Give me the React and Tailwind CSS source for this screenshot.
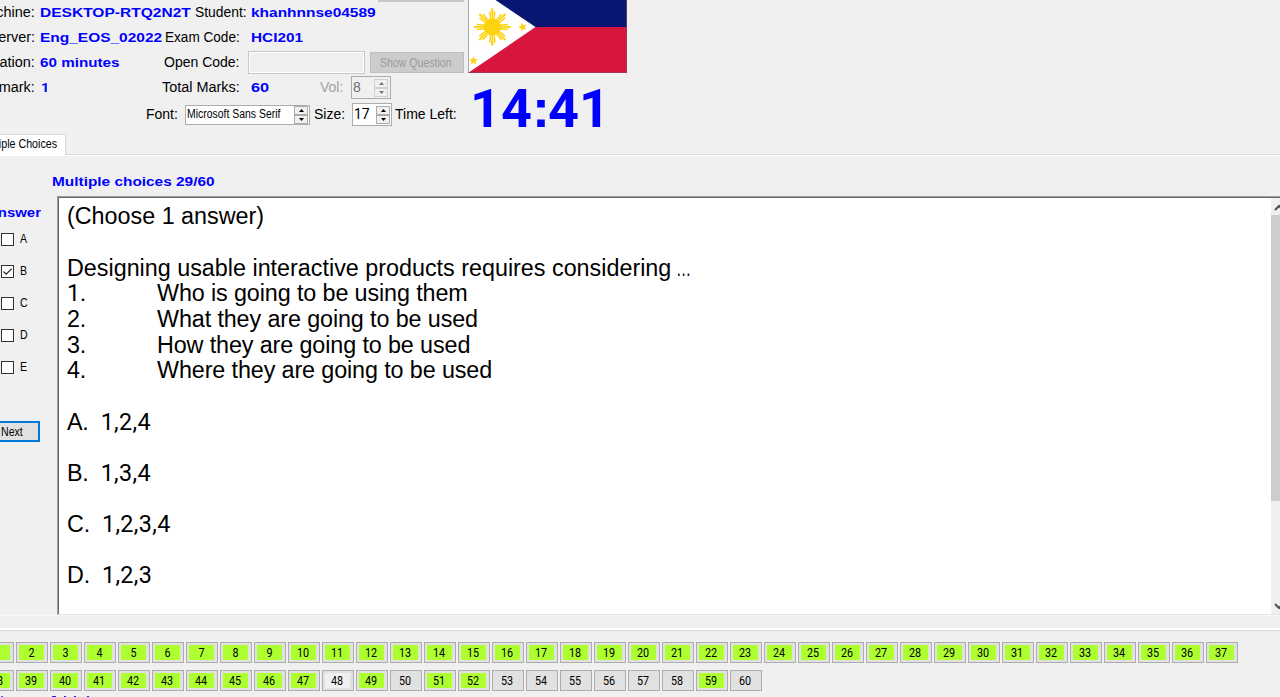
import React from "react";

const INFO = "font-bold text-[#0000ff] origin-left inline-block whitespace-nowrap";

function Label({ className = "", children }) {
  return <span className={"inline-block whitespace-nowrap text-[14px] " + className}>{children}</span>;
}

function Left({ children }) {
  return (
    <div className="flex w-[35px] shrink-0 justify-end overflow-hidden whitespace-nowrap text-[14px]">
      <span className="inline-block origin-right scale-x-[1.03]">{children}</span>
    </div>
  );
}

function Spin({ disabled }) {
  const fill = disabled ? "#777" : "#000";
  const box = disabled ? "border-[#d0d0d0]" : "border-[#acacac]";
  return (
    <div className="flex w-[14px] shrink-0 flex-col">
      <div className={"flex h-[9px] items-center justify-center border bg-[#f0f0f0] " + box}>
        <svg width="5" height="3" viewBox="0 0 5 3"><path d="M2.5 0L5 3H0z" fill={fill} /></svg>
      </div>
      <div className={"flex h-[9px] items-center justify-center border bg-[#f0f0f0] " + box}>
        <svg width="5" height="3" viewBox="0 0 5 3"><path d="M0 0H5L2.5 3z" fill={fill} /></svg>
      </div>
    </div>
  );
}

function Star({ x, y, r, rot }) {
  const pts = Array.from({ length: 10 }, (_, i) => {
    const a = (Math.PI * i) / 5 - Math.PI / 2;
    const q = i % 2 ? r * 0.42 : r;
    return `${Math.cos(a) * q},${Math.sin(a) * q}`;
  }).join(" ");
  return <polygon points={pts} fill="#fcd116" transform={`translate(${x} ${y}) rotate(${rot})`} />;
}

function Flag() {
  return (
    <svg width="159" height="73" viewBox="0 0 159 73" className="block">
      <rect width="159" height="27" fill="#071673" />
      <rect y="27" width="159" height="46" fill="#d8163d" />
      <path d="M0 -18.5V73L67.5 27z" fill="#fff" />
      <g transform="translate(24.3 27)" fill="#fcd30c">
        <circle r="8.5" />
        {[0, 45, 90, 135, 180, 225, 270, 315].map((a) => (
          <g key={a} transform={`rotate(${a})`}>
            <path d="M-.7 -7L-1.1 -18.4H1.1L.7 -7z" />
            <path d="M-2.4 -7L-3.3 -15.4L-1.7 -15.8L-1.1 -7z" />
            <path d="M2.4 -7L3.3 -15.4L1.7 -15.8L1.1 -7z" />
          </g>
        ))}
      </g>
      <Star x={54.7} y={27} r={4.7} rot={-18} />
      <Star x={5.5} y={60.7} r={4.7} rot={0} />
      <path d="M.5 0V72.5" stroke="#aaa" fill="none" />
      <path d="M0 72.5H159M158.5 0V73" stroke="#8c4555" strokeOpacity=".7" fill="none" />
    </svg>
  );
}

function Header() {
  return (
    <div className="flex h-[134px]">
      <div className="w-[468px] shrink-0">
        <div className="flex h-[25px] items-center text-[13px]">
          <Left>Machine:</Left>
          <div className="w-[155px] pl-[5px]"><span className={INFO + " scale-x-[1.195]"}>DESKTOP-RTQ2N2T</span></div>
          <div className="w-[61px] pl-[5px]"><Label className="origin-left scale-x-[.99]">Student:</Label></div>
          <span className={INFO + " scale-x-[1.19]"}>khanhnnse04589</span>
          <div className="mr-1 ml-auto h-[2px] w-[86px] self-start bg-[#c8c8c8]" />
        </div>
        <div className="flex h-[25px] items-center text-[13px]">
          <Left>Server:</Left>
          <div className="w-[125px] pl-[5px]"><span className={INFO + " scale-x-[1.19]"}>Eng_EOS_02022</span></div>
          <div className="w-[91px] pl-[5px]"><Label className="origin-left scale-x-[.97]">Exam Code:</Label></div>
          <span className={INFO + " scale-x-[1.18]"}>HCI201</span>
        </div>
        <div className="flex h-[25px] items-center text-[13px]">
          <Left>Duration:</Left>
          <div className="w-[124px] pl-[5px]"><span className={INFO + " scale-x-[1.17]"}>60 minutes</span></div>
          <div className="w-[89px] pl-[5px]"><Label className="origin-left">Open Code:</Label></div>
          <div className="h-[23px] w-[117px] border border-[#c8c8c8] bg-[#f0f0f0] outline outline-1 -outline-offset-2 outline-white" />
          <div className="mr-1 ml-auto flex h-[21px] w-[94px] items-center justify-center border border-[#bfbfbf] bg-[#cccccc] text-[12px] whitespace-nowrap text-[#9a9a9a]">
            <span className="inline-block -translate-x-px scale-x-[.88]">Show Question</span>
          </div>
        </div>
        <div className="flex h-[25px] items-center text-[13px]">
          <Left>Q mark:</Left>
          <div className="w-[122px] pl-[6px]"><span className={INFO + " scale-x-[1.1] [font-family:Roboto,sans-serif]"}>1</span></div>
          <div className="w-[94px] pl-[5px]"><Label className="origin-left scale-x-[1.03]">Total Marks:</Label></div>
          <span className={INFO + " w-[69px] scale-x-[1.25]"}>60</span>
          <Label className="w-[31px] text-[#a0a0a0]">Vol:</Label>
          <div className="flex h-[23px] w-[40px] items-center justify-between border border-[#acacac] pr-[2px] pl-px">
            <span className="pb-[2px] text-[14px] leading-none text-[#6d6d6d]">8</span>
            <Spin disabled />
          </div>
        </div>
        <div className="flex h-[29px] items-center pl-[146px] text-[13px]">
          <Label className="w-[39px]">Font:</Label>
          <div className="flex h-[20px] w-[125px] items-center justify-between border border-[#acacac] bg-white pr-px pl-px">
            <span className="inline-block origin-left scale-x-[.87] pb-px text-[12px] whitespace-nowrap">Microsoft Sans Serif</span>
            <Spin />
          </div>
          <Label className="w-[42px] pl-[4px]">Size:</Label>
          <div className="flex h-[23px] w-[40px] items-center justify-between border border-[#acacac] bg-white pr-px pl-px">
            <span className="pb-[2px] text-[14px] leading-none [font-family:Roboto,sans-serif]">17</span>
            <Spin />
          </div>
          <Label className="pl-[3px]">Time Left:</Label>
        </div>
      </div>
      <div className="flex flex-col">
        <Flag />
        <div className="flex h-[61px] items-center pt-[10px] pl-[2px]">
          <span className="text-[54px] leading-none font-bold whitespace-nowrap text-[#0000ff] [font-family:Roboto,sans-serif]">
            14<span className="tracking-[-2px] [font-family:'Liberation_Sans',sans-serif]">:</span>41
          </span>
        </div>
      </div>
    </div>
  );
}

const ANSWERS = ["A", "B", "C", "D", "E"];
const INTRO = ["(Choose 1 answer)", "", "Designing usable interactive products requires considering"];
const ITEMS = [
  ["1.", "Who is going to be using them"],
  ["2.", "What they are going to be used"],
  ["3.", "How they are going to be used"],
  ["4.", "Where they are going to be used"],
];
const OPTIONS = [["A.", "1,2,4"], ["B.", "1,3,4"], ["C.", "1,2,3,4"], ["D.", "1,2,3"]];

function Question() {
  return (
    <div className="flex h-[419px]">
      <div className="flex w-[57px] shrink-0 flex-col">
        <div className="flex h-[27px] w-[41px] items-center justify-end overflow-hidden pt-[6px] text-[13px] font-bold whitespace-nowrap text-[#0000ff]">
          <span className="inline-block origin-right scale-x-[1.15]">Answer</span>
        </div>
        {ANSWERS.map((a) => (
          <div key={a} className="flex h-[32px] items-center gap-[6px] pl-px text-[12px] leading-none">
            <div className="flex size-[13px] items-center justify-center border border-[#333] bg-white">
              {a === "B" && (
                <svg width="11" height="11" viewBox="0 0 11 11"><path d="M1.5 5.5L4.2 8.2L9.7 2.6" fill="none" stroke="#222" strokeWidth="1.2" /></svg>
              )}
            </div>
            <span className="inline-block origin-left scale-x-[.88]">{a}</span>
          </div>
        ))}
        <div className="mt-[38px] flex h-[21px] w-[40px] items-center border-2 border-l-0 border-[#0078d7] bg-[#e1e1e1] pl-px text-[12px]">
          <span className="inline-block origin-left scale-x-[.88]">Next</span>
        </div>
      </div>
      <div className="flex grow border-t border-l border-b border-t-[#a0a0a0] border-l-[#a0a0a0] border-b-[#e3e3e3]">
        <div className="flex grow overflow-hidden border-t border-l border-[#696969] bg-white">
          <div className="grow pt-[6.4px] pl-[8px] text-[23.33px] leading-[25.65px] whitespace-pre">
            {INTRO.map((l, i) => (
              <div key={i} className="flex h-[25.65px]">
                {l}
                {i === 2 && <span className="ml-[5px] inline-block origin-left scale-x-[.65]">…</span>}
              </div>
            ))}
            {ITEMS.map(([n, t]) => (
              <div key={n} className="flex h-[25.65px] tracking-[-0.11px]">
                <span className={n === "1." ? "w-[90px] [font-family:Roboto,sans-serif]" : "w-[90px]"}>{n}</span>
                <span>{t}</span>
              </div>
            ))}
            {OPTIONS.map(([n, t]) => (
              <div key={n} className="flex h-[51.3px] gap-[12px] pt-[25.65px] tracking-[-0.2px]">
                <span>{n}</span>
                <span className="tracking-[0.35px] [font-family:Roboto,sans-serif]">{t}</span>
              </div>
            ))}
          </div>
          <div className="flex w-[9px] shrink-0 flex-col overflow-hidden bg-[#f0f0f0]">
            <svg width="9" height="17" viewBox="0 0 9 17"><path d="M4 12L8 8L12 12" fill="none" stroke="#505050" strokeWidth="2" /></svg>
            <div className="h-[286px] bg-[#cdcdcd]" />
            <svg className="mt-auto" width="9" height="17" viewBox="0 0 9 17"><path d="M4 7L8 11L12 7" fill="none" stroke="#505050" strokeWidth="2" /></svg>
          </div>
        </div>
      </div>
    </div>
  );
}

const ROW1 = Array.from({ length: 37 }, (_, i) => i + 1);
const ROW2 = Array.from({ length: 23 }, (_, i) => i + 38);
const GREY = [50, 53, 54, 55, 56, 57, 58, 60];

function NumButton({ n }) {
  const tone = n === 48 ? "bg-[#f0f0f0]" : GREY.includes(n) ? "bg-[#e1e1e1]" : "bg-[#adff2f]";
  return (
    <div className="h-[21px] w-[32px] shrink-0 border border-[#adadad] bg-[#e1e1e1] p-[2px]">
      <div className={"mr-px flex h-[15px] items-center justify-center pt-px text-[12.5px] leading-none [font-family:Roboto,sans-serif] " + tone}>
        <span className="inline-block scale-x-[.86]">{n}</span>
      </div>
    </div>
  );
}

export default function App() {
  return (
    <div className="h-[697px] w-[1280px] overflow-hidden bg-[#f0f0f0] text-black [font-family:'Liberation_Sans',Arial,sans-serif]">
      <Header />
      <div className="flex h-[21px] items-end">
        <div className="flex h-[21px] w-[66px] items-center justify-end overflow-hidden border-t border-r border-[#d9d9d9] bg-white pr-[8px] pb-[2px] text-[12px] whitespace-nowrap">
          <span className="inline-block origin-right scale-x-[.89]">Multiple Choices</span>
        </div>
        <div className="h-px grow bg-[#d9d9d9]" />
      </div>
      <div className="h-[41px] border-t border-white pt-[16px] pl-[52px] text-[13px] font-bold text-[#0000ff]">
        <span className="inline-block origin-left scale-x-[1.184]">Multiple choices 29/60</span>
      </div>
      <Question />
      <div className="h-px bg-[#f8f8f8]" />
      <div className="mt-[12px] h-[2px] bg-white" />
      <div className="h-px bg-[#d9d9d9]" />
      <div className="mt-[11px] -ml-[18px] flex gap-[2px]">{ROW1.map((n) => <NumButton key={n} n={n} />)}</div>
      <div className="mt-[7px] -ml-[18px] flex gap-[2px]">{ROW2.map((n) => <NumButton key={n} n={n} />)}</div>
      <div className="mt-[5px] flex h-px pl-px">
        <div className="w-[2px] bg-[#5050ff]" />
        <div className="ml-[49px] w-[4px] bg-[#2020f0]" />
        <div className="ml-[8px] w-[2px] bg-[#2020f0]" />
        <div className="ml-[8px] w-[2px] bg-[#2020f0]" />
        <div className="ml-[11px] w-[2px] bg-[#2020f0]" />
      </div>
    </div>
  );
}
